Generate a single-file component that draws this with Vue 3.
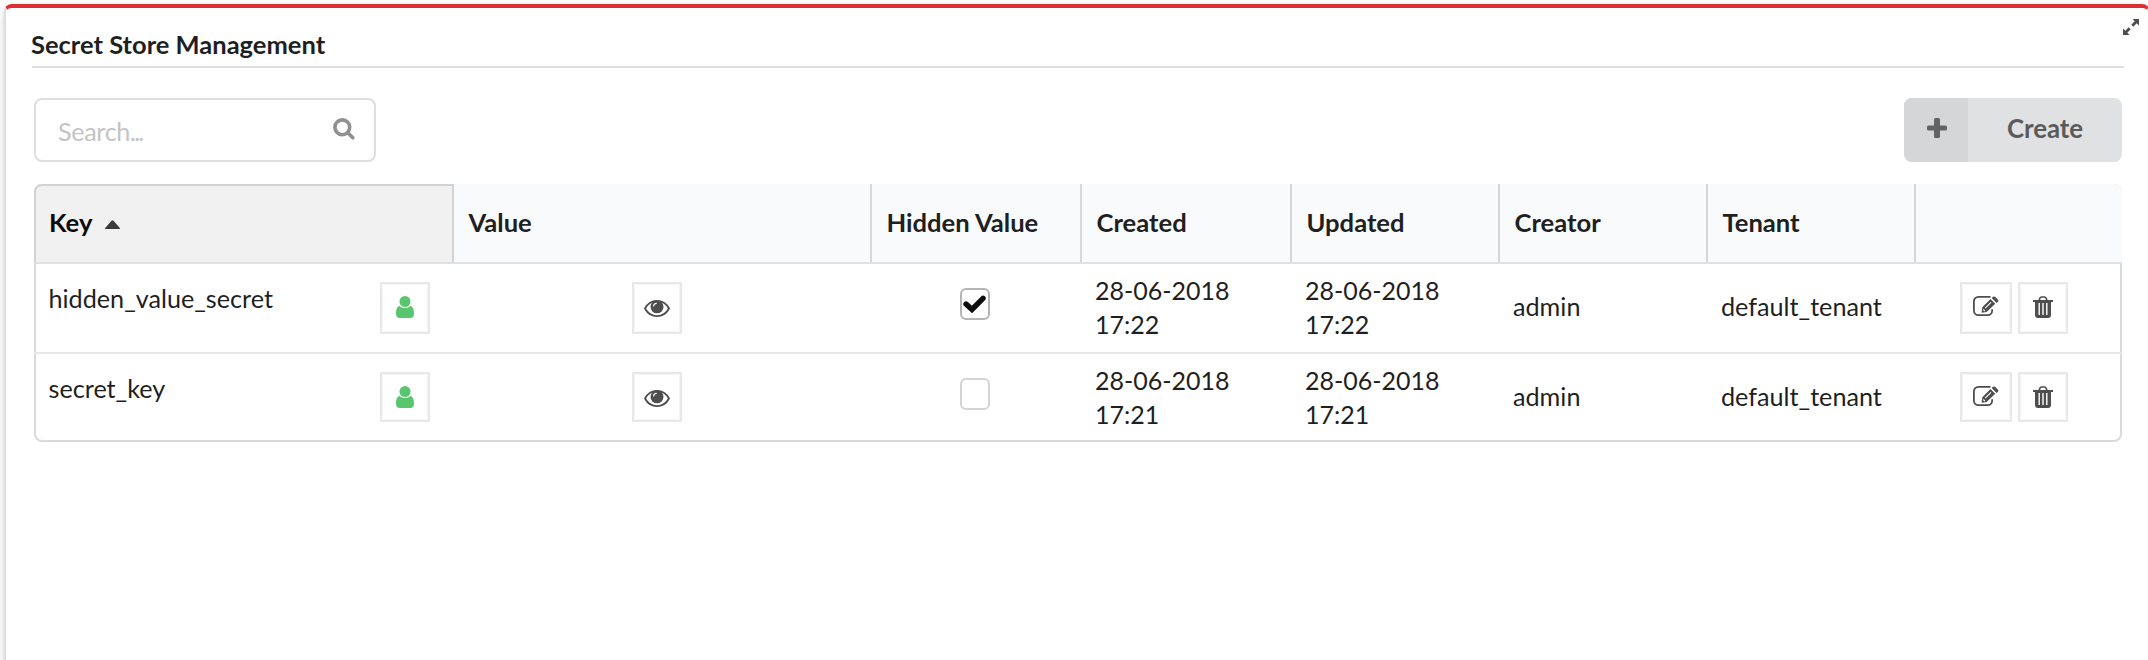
<script setup>
const columns = ['Key', 'Value', 'Hidden Value', 'Created', 'Updated', 'Creator', 'Tenant', '']
const rows = [
  { key: 'hidden_value_secret', hidden: true, date: '28-06-2018', time: '17:22', creator: 'admin', tenant: 'default_tenant' },
  { key: 'secret_key', hidden: false, date: '28-06-2018', time: '17:21', creator: 'admin', tenant: 'default_tenant' }
]
</script>

<template>
  <div class="page">
    <section class="widget">
      <svg class="expand" viewBox="0 0 16 16"><path d="M9.500 0H16v6.500L13.700 4.300 10.300 7.700 8.300 5.700 11.700 2.300ZM6.500 16H0V9.500L2.300 11.700 5.700 8.300 7.700 10.300 4.300 13.700Z" /></svg>
      <h5 class="title"><span>Secret Store Management</span></h5>
      <div class="toolbar">
        <div class="search">
          <span>Search<span class="dots">...</span></span>
          <svg viewBox="0 0 22 22"><circle cx="9.300" cy="9.300" r="7.400" /><path d="M14.800 14.800l5 5" /></svg>
        </div>
        <button class="create">
          <i><svg viewBox="0 0 20 20"><path d="M8.500 0h3a1.500 1.500 0 0 1 1.500 1.500V7.500h5.500a1.500 1.500 0 0 1 1.500 1.500v2a1.500 1.500 0 0 1-1.500 1.500H13v6a1.500 1.500 0 0 1-1.500 1.500h-3A1.500 1.500 0 0 1 7 18.500v-6H1.500A1.500 1.500 0 0 1 0 11V9a1.500 1.500 0 0 1 1.500-1.500H7v-6A1.500 1.500 0 0 1 8.500 0z" /></svg></i>
          <span>Create</span>
        </button>
      </div>
      <div class="table">
        <div class="row head">
          <div v-for="(c, i) in columns" :key="i" class="th" :class="{ sorted: i === 0 }">
            <span>{{ c }}</span>
            <svg v-if="i === 0" viewBox="0 0 15 9"><path d="M0.600 9Q0 9 0 8.300L6.500 0.700Q7.500 0 8.500 0.700L15 8.300Q15 9 14.400 9Z" /></svg>
          </div>
        </div>
        <div v-for="r in rows" :key="r.key" class="row body">
          <div class="td key">
            <span>{{ r.key }}</span>
            <div class="btn user"><svg viewBox="0 0 18 22"><circle cx="9" cy="5.500" r="5.500" /><path d="M3.800 10C1 10.500 0 13.500 0 17.500 0 20.500 1.500 22 3.600 22h10.800c2.100 0 3.600-1.500 3.600-4.500 0-4-1-7-3.800-7.500-1.500 1.400-3.200 2.100-5.200 2.100S5.300 11.400 3.800 10z" /></svg></div>
          </div>
          <div class="td center">
            <div class="btn eye"><svg viewBox="0 0 26 17"><path class="line" d="M1 8.500C3.700 3.500 8 0.900 13 0.900s9.300 2.600 12 7.600C22.300 13.500 18 16.100 13 16.100S3.700 13.500 1 8.500z" /><circle cx="13" cy="6.800" r="6.500" /><path class="shine" d="M9.600 6.400c0-2 1.100-3 3.100-3" /></svg></div>
          </div>
          <div class="td center check">
            <div class="box" :class="{ on: r.hidden }"><svg v-if="r.hidden" viewBox="0 0 23 18"><path d="M3 9L9 14.500 20 3.300" /></svg></div>
          </div>
          <div class="td date"><span>{{ r.date }}<br />{{ r.time }}</span></div>
          <div class="td date"><span>{{ r.date }}<br />{{ r.time }}</span></div>
          <div class="td"><span>{{ r.creator }}</span></div>
          <div class="td"><span>{{ r.tenant }}</span></div>
          <div class="td actions">
            <div class="btn edit"><svg viewBox="0 0 26 20"><path class="frame" d="M17.500 0.900H5.400A4.500 4.500 0 0 0 0.900 5.400v9.200a4.500 4.500 0 0 0 4.500 4.500h9.300a4.500 4.500 0 0 0 4.500-4.500v-1.300" /><path d="M9.300 11.200L17.500 3l4.700 4.700-8.600 8.400L8.600 16.700zM18.700 2l1.300-1.200q1-.8 2 0l3 3q.8 1 0 2L23.500 7z" /><path class="shine" d="M12.200 12.200l5.800-5.800M10.300 13.500l1.600 1.600" /></svg></div>
            <div class="btn trash"><svg viewBox="0 0 20 22"><path class="handle" d="M6 4.500L7 2Q7.400 1 8.500 1h3q1.100 0 1.500 1l1 2.500" /><path d="M0 4h20v2h-2v13q0 3-3 3H5q-3 0-3-3V6H0z" /><path class="slots" d="M6.200 7v12M10 7v12M13.800 7v12" /></svg></div>
          </div>
        </div>
      </div>
    </section>
  </div>
</template>

<style>
body { margin: 0; overflow: hidden; background: #fff; }
</style>

<style scoped>
* { box-sizing: border-box; }
.page { width: 2148px; height: 660px; overflow: hidden; padding: 4px 0 0 4px; font-family: Lato, "Liberation Sans", sans-serif; font-size: 25.200px; line-height: 34px; color: #1f1f1f; }
.widget { position: relative; width: 2146px; height: 700px; border: 2px solid #dededf; border-top: 4px solid #db2f33; border-radius: 8px; padding: 0 26px; background: #fff; box-shadow: 0 2px 4px rgba(34, 36, 38, .12), 0 4px 16px rgba(34, 36, 38, .1); }
.expand { position: absolute; left: 2117px; top: 11px; width: 16px; height: 16px; fill: #4d4d4d; }
.title { margin: 0; height: 60px; width: 2092px; padding-top: 19px; border-bottom: 2px solid #dededf; font-size: 25.500px; line-height: 34px; font-weight: 700; }
.title span { margin-left: -1px; }
.toolbar { display: flex; justify-content: space-between; margin: 30px 0 0 2px; width: 2088px; }
.search { width: 342px; height: 64px; border: 2px solid #dededf; border-radius: 8px; padding: 0 19px 0 22px; display: flex; justify-content: space-between; color: #c4c4c4; }
.search > span { padding-top: 14px; letter-spacing: -.350px; }
.dots { letter-spacing: -1.800px; }
.search svg { width: 22px; height: 22px; margin-top: 18px; fill: none; stroke: #909090; stroke-width: 3.600; stroke-linecap: round; }
.create { width: 218px; height: 64px; border: 0; border-radius: 8px; padding: 0; overflow: hidden; display: flex; background: #e0e1e2; color: #5a5a5a; font: 700 25.800px/34px Lato, sans-serif; }
.create i { width: 64px; height: 64px; background: #d5d6d7; display: flex; justify-content: center; padding: 20px 0 0 1px; }
.create i svg { width: 20px; height: 20px; fill: #636363; }
.create span { flex: 1; padding-top: 13px; text-align: center; }
.table { margin: 22px 0 0 2px; width: 2088px; height: 258px; border: 2px solid #dadadb; border-radius: 8px; }
.row { display: grid; grid-template-columns: 420px 418px 210px 210px 208px 208px 208px 206px; margin: 0 -2px; }
.head { height: 80px; margin-top: -2px; border-bottom: 2px solid #e0e1e2; background: #f9fafb; border-radius: 8px 8px 0 0; font-weight: 700; font-size: 25.600px; }
.th { display: flex; padding: 21px 0 0 14.500px; border-right: 2px solid #d7d8d9; }
.th:last-child { border-right: 0; }
.sorted { padding: 19px 0 0 13px; border: 2px solid #d2d2d3; border-bottom: 0; border-radius: 8px 0 0 0; background: #f1f1f1; color: #0b0b0b; }
.sorted svg { width: 15px; height: 9px; margin: 15px 0 0 12.500px; fill: #3a3a3a; }
.body { height: 90px; }
.body + .body { height: 88px; }
.head + .body { border-bottom: 2px solid #e7e7e8; }
.td { display: flex; align-items: flex-start; padding: 25px 0 0 13px; }
.key { justify-content: space-between; padding: 18px 24px 0 14.500px; }
.key span { margin-top: -1px; }
.center { justify-content: center; padding: 18px 4px 0 0; }
.check { padding: 24px 4px 0 0; }
.date { padding: 9px 0 0 13px; font-size: 25px; }
.btn { width: 50px; height: 52px; border: 2px solid #e8e8e8; box-shadow: inset 0 0 0 1px #f5f5f5; display: flex; justify-content: center; fill: #4e4e4e; }
.body + .body .btn { height: 50px; }
.btn svg { flex: none; }
.user svg { width: 18px; height: 22px; margin-top: 12px; fill: #58c66e; }
.eye { position: relative; left: -4px; }
.eye svg { width: 26px; height: 17px; margin-top: 16px; }
.line { fill: none; stroke: #4e4e4e; stroke-width: 1.800; }
.shine { fill: none; stroke: #fff; stroke-width: 1.100; }
.box { width: 30px; height: 32px; border: 2px solid #d4d4d5; border-radius: 6px; }
.box.on { border-color: #b4b4b5; padding: 5px 0 0 1px; }
.box svg { display: block; width: 23px; height: 18px; fill: none; stroke: #0d0d0d; stroke-width: 5.400; stroke-linejoin: miter; stroke-linecap: round; }
.actions { padding: 18px 0 0 44px; gap: 6px; }
.edit { width: 52px; }
.edit svg { width: 26px; height: 20px; margin-top: 12px; }
.frame { fill: none; stroke: #4e4e4e; stroke-width: 1.800; }
.trash svg { width: 20px; height: 22px; margin-top: 12px; }
.handle { fill: none; stroke: #4e4e4e; stroke-width: 1.700; }
.slots { fill: none; stroke: #fff; stroke-width: 1.400; }
</style>
